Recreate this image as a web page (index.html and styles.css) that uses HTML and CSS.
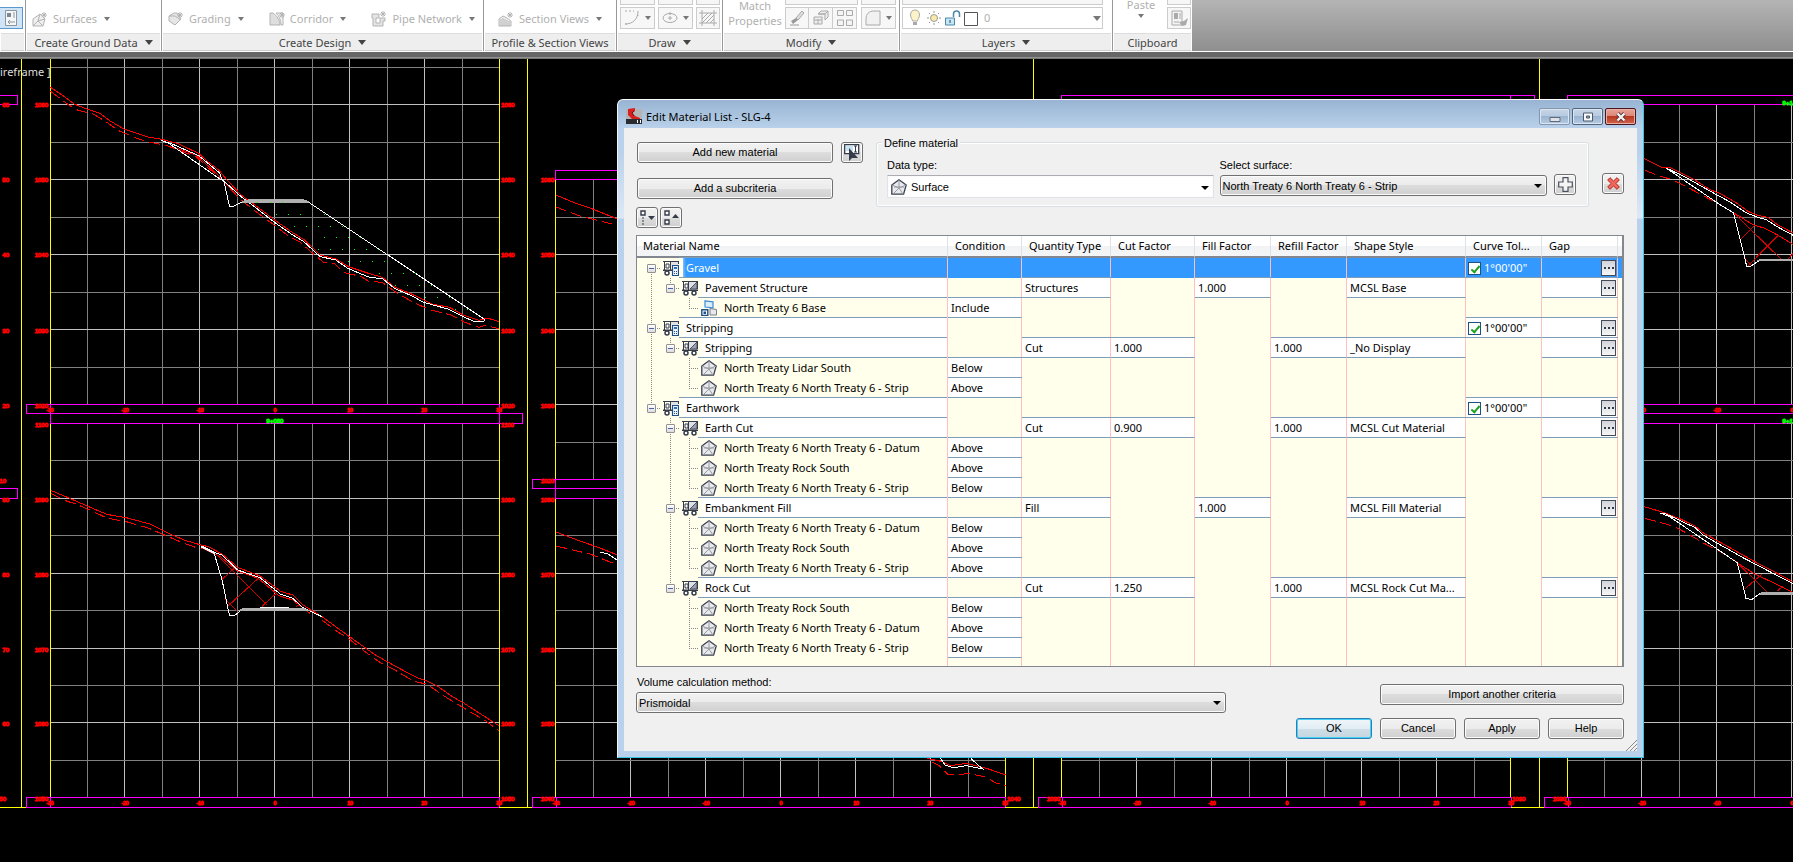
FILE: index.html
```html
<!DOCTYPE html>
<html lang="en">
<head>
<meta charset="utf-8">
<title>Edit Material List - SLG-4</title>
<link rel="stylesheet" href="styles.css">
</head>
<body>
<svg class="defs" aria-hidden="true">
  <defs>
    <symbol id="surface" viewBox="0 0 16 16"><path d="M.8 6 8 .8 15.2 6 12.6 15.2H.8z" fill="#e9eaee" stroke="#3b4150" stroke-width="1.3"/><path d="M8 1v8L1 6M8 9l7-3M8 9l4 6M8 9l-6 6M3 8h10" fill="none" stroke="#9a9ca3"/></symbol>
    <symbol id="truck" viewBox="0 0 16 16"><path d="M0 1.500h16M1.500 2v8M6.500 1v9M15.500 2v7" fill="none" stroke="#343b4a"/><path d="M3 4h3v4H3z" fill="#fff" stroke="#343b4a"/><path d="M7 2h8v7H7z" fill="#dfe1e6"/><path d="m8 9 7-7v7z" fill="#9aa0ac" stroke="#343b4a" stroke-width=".8"/><path d="M0 9.500h16v1.500H0z" fill="#343b4a"/><circle cx="4" cy="13" r="2" fill="#fff" stroke="#343b4a" stroke-width="1.500"/><circle cx="12" cy="13" r="2" fill="#fff" stroke="#343b4a" stroke-width="1.500"/></symbol>
    <symbol id="truckcalc" viewBox="0 0 16 16"><path d="M0 1.500h16M1.500 2v8M7.500 1v9M15.500 1v3" fill="none" stroke="#343b4a"/><path d="M3 4h3v4H3z" fill="#fff" stroke="#343b4a"/><path d="M8 2h7v3H8z" fill="#dfe1e6"/><path d="M0 9.500h9v1.500H0z" fill="#343b4a"/><circle cx="4" cy="13" r="2" fill="#fff" stroke="#343b4a" stroke-width="1.500"/><path d="M9.500 5.500h6v10h-6z" fill="#eef5fc" stroke="#1f4f86" stroke-width="1.2"/><path d="M11 7h3v2h-3z" fill="#2f6fb5"/><path d="M11 11.500h1M13 11.500h1M11 13.500h1M13 13.500h1" stroke="#1f4f86"/></symbol>
    <symbol id="corridor" viewBox="0 0 16 16"><path d="m4 .8 8 1v6L4 7z" fill="#dcedfb" stroke="#3d8ed6" stroke-width="1.2"/><path d="m9 8.500 6.500 1v5.500H9z" fill="#e6e8ec" stroke="#7a7f8b"/><path d="M.8 9.800h6v5.700h-6z" fill="#fff" stroke="#1f4f86" stroke-width="1.4"/><path d="M2.500 11.500h2.500V14H2.500z" fill="#1f4f86"/></symbol>
  </defs>
</svg>

<header class="ribbon">
  <section class="panel p-tools">
    <div class="body"><button class="tile on" aria-label="Toolspace"><svg width="12" height="16" viewBox="0 0 12 16"><path d="M.5.500h11v15H.5z" fill="#f4f6f8" stroke="#8d959e"/><path d="M2 3h4v4H2z" fill="#7d8791"/><path d="M8 3h2M8 5h2M8 7h2M3 12h7M5 10l-2 2 2 2" fill="none" stroke="#8d959e"/></svg></button></div>
    <h2></h2>
  </section>
  <section class="panel p-ground">
    <div class="body">
      <button class="cmd"><svg width="16" height="16" viewBox="0 0 16 16" fill="none" stroke="#b3b3b3"><path d="M1 15V8l7-5 5 5-2 7z" fill="#f0f0f0"/><path d="m8 3-2 7-5 5M6 10l5 5M6 10l7-2M12 1v6M9 4h6M10 2l4 4M14 2l-4 4"/></svg>Surfaces<i></i></button>
    </div>
    <h2>Create Ground Data<i></i></h2>
  </section>
  <section class="panel p-design">
    <div class="body">
      <button class="cmd"><svg width="16" height="16" viewBox="0 0 16 16" fill="none" stroke="#b3b3b3"><path d="M1 10V5l5-3h3l4 6-6 6z" fill="#e6e6e6"/><path d="M1 5h6l6 4M12 1v6M9 4h6M10 2l4 4M14 2l-4 4"/></svg>Grading<i></i></button>
      <button class="cmd"><svg width="16" height="16" viewBox="0 0 16 16" fill="none" stroke="#b3b3b3"><path d="M1 2h3c4 3 7 7 7 12H1z" fill="#dedede"/><path d="M7 2h7v12h-2C12 9 10 5 7 2M13 1v6M10 4h6M11 2l4 4M15 2l-4 4" fill="#f4f4f4"/></svg>Corridor<i></i></button>
      <button class="cmd"><svg width="16" height="16" viewBox="0 0 16 16" fill="none" stroke="#b3b3b3"><path d="M1 3h7v4H5v5h4V7h5v3h-2v5H2V7H1z" fill="#e4e4e4"/><path d="M12 0v6M9 3h6M10 1l4 4M14 1l-4 4"/></svg>Pipe Network<i></i></button>
    </div>
    <h2>Create Design<i></i></h2>
  </section>
  <section class="panel p-views">
    <div class="body">
      <button class="cmd"><svg width="16" height="16" viewBox="0 0 16 16" fill="none" stroke="#b3b3b3"><path d="M1 15V8l4-3 4 2 4 3v5z" fill="#eee"/><path d="M3 8v7M5 7v8M7 8v7M9 9v6M11 10v5M12 1v6M9 4h6M10 2l4 4M14 2l-4 4"/></svg>Section Views<i></i></button>
    </div>
    <h2>Profile &amp; Section Views</h2>
  </section>
  <section class="panel p-draw">
    <div class="body">
      <div class="tiles"><span class="stub w36"></span><span class="stub w36"></span><span class="stub"></span>
        <button class="tile split" aria-label="Arc"><svg width="16" height="16" viewBox="0 0 16 16" fill="none" stroke="#aaa"><path d="M14 1c0 8-5 13-13 13"/><path d="M1 1h9M1 14h3M14 5v1" stroke-dasharray="2 2"/></svg><i></i></button>
        <button class="tile split" aria-label="Ellipse"><svg width="16" height="16" viewBox="0 0 16 16" fill="none" stroke="#aaa"><ellipse cx="8" cy="8" rx="7" ry="4.500"/><path d="M6 8h4M8 6v4M8 2v3"/></svg><i></i></button>
        <button class="tile" aria-label="Hatch"><svg width="18" height="16" viewBox="0 0 18 16" fill="none" stroke="#aaa"><path d="M3 0v16M15 0v16M0 3h18M0 13h18M3 9l6-6M3 13 13 3M7 13l8-8M11 13l4-4"/></svg></button></div>
    </div>
    <h2>Draw<i></i></h2>
  </section>
  <section class="panel p-modify">
    <div class="body">
      <button class="match">Match<br>Properties</button>
      <div class="tiles"><span class="stub w72"></span><span class="stub w36"></span>
        <div class="trio">
          <button class="tile" aria-label="Erase"><svg width="16" height="16" viewBox="0 0 16 16"><path d="M7 8 13 1l2 2-6 7z" fill="#ddd" stroke="#aaa"/><path d="m2 11 5-3 2 2-5 4z" fill="#999"/><path d="M1 15h9" stroke="#999"/></svg></button>
          <button class="tile" aria-label="Explode"><svg width="16" height="16" viewBox="0 0 16 16" fill="#eee" stroke="#aaa"><path d="M5 4 8 1h7l-3 3zM12 4l3-3v6l-3 3M1 7h8v7H1zM5 4h7v6M5 9v5M1 10h8"/></svg></button>
          <button class="tile" aria-label="Array"><svg width="16" height="16" viewBox="0 0 16 16" fill="#f4f4f4" stroke="#aaa"><path d="M.5.500h6v5h-6zM9.500.500h6v5h-6zM.5 10h6v5.500h-6zM9.500 10h6v5.500h-6z"/></svg></button>
        </div>
        <button class="tile split" aria-label="Fillet"><svg width="16" height="16" viewBox="0 0 16 16" fill="#f1f1f1" stroke="#aaa"><path d="M1 15V9c0-5 3-8 8-8h6v14z"/></svg><i></i></button></div>
    </div>
    <h2>Modify<i></i></h2>
  </section>
  <section class="panel p-layers">
    <div class="body">
      <div class="layers"><span class="stub full"></span>
        <button class="layer"><svg width="70" height="18" viewBox="0 0 70 18"><path d="M6 1C3 1 1.500 3 1.500 6s2 4 2 6h5c0-2 2-3 2-6S9 1 6 1z" fill="#fdf3c8" stroke="#aaa"/><path d="M4 13h4v3H4z" fill="#aaa"/><circle cx="25" cy="9" r="3.500" fill="#fbe9a8" stroke="#999"/><path d="M25 2v2M25 14v2M18 9h2M30 9h2M20 4l1 1M29 13l1 1M30 4l-1 1M20 14l1-1" stroke="#999"/><path d="M36.500 9h9v7h-9z" fill="#c4e6f5" stroke="#4f86a8"/><path d="M44.500 8V5c0-4 6-4 6 0v3" fill="none" stroke="#4f86a8" stroke-width="1.500"/><path d="M41 11v3" stroke="#246"/><path d="M55.500 3.500h13v13h-13z" fill="#fff" stroke="#555"/></svg><span>0</span><i></i></button>
      </div>
    </div>
    <h2>Layers<i></i></h2>
  </section>
  <section class="panel p-clip">
    <div class="body"><button class="match paste">Paste<i></i></button>
      <div class="tiles"><span class="stub"></span><button class="tile" aria-label="Copy clip"><svg width="17" height="17" viewBox="0 0 17 17"><path d="M1 1h10v14H1z" fill="#f4f4f4" stroke="#aaa"/><path d="M3 3h4v6H3z" fill="#aaa"/><path d="M8 4h2M8 6h2M8 8h2M3 12h5" stroke="#aaa"/><path d="m8 12 3 4 4-1 2-7-4 3z" fill="#aaa"/></svg></button></div>
    </div>
    <h2>Clipboard</h2>
  </section>
</header>

<main class="desktop">
  <svg class="drawing" role="img" aria-label="Cross section drawing">
    <defs>
      <g id="vlines" fill="none"><path class="minor" d="M37.500 0V748M112.500 0V748M187.500 0V748M262.500 0V748M337.500 0V748M412.500 0V748"/><path class="major" d="M74.500 0V748M149.500 0V748M224.500 0V748M299.500 0V748M374.500 0V748"/></g>
      <g id="hl-a" fill="none"><path class="minor" d="M0 67.500H449M0 142.500H449M0 217.500H449M0 292.500H449M0 367.500H449M0 460.500H449M0 535.500H449M0 610.500H449M0 685.500H449M0 760.500H449"/><path class="major" d="M0 104.500H449M0 179.500H449M0 254.500H449M0 329.500H449M0 498.500H449M0 573.500H449M0 648.500H449M0 722.500H449"/></g>
      <g id="hl-b" fill="none"><path class="minor" d="M0 217.500H449M0 292.500H449M0 367.500H449M0 442.500H449M0 535.500H449M0 610.500H449M0 685.500H449M0 760.500H449"/><path class="major" d="M0 254.500H449M0 329.500H449M0 404.500H449M0 573.500H449M0 648.500H449M0 722.500H449"/></g>
      <g id="offs"><text x="50" y="0">-30</text><text x="125" y="0">-20</text><text x="200" y="0">-10</text><text x="275" y="0">0</text><text x="350" y="0">10</text><text x="424" y="0">20</text><text x="499" y="0">30</text></g>
      <g id="foot" fill="none"><path class="mag" d="M26.500 797.500H499.500V807.500H26.500zM50.500 797.500V807.500"/><path class="yel" d="M-7 807.500H26M21.500 59V807.500M499.500 807.500H532"/></g>
    </defs>

    <use href="#vlines" x="50" y="59"/><use href="#vlines" x="556" y="59"/><use href="#vlines" x="1062" y="59"/><use href="#vlines" x="1567" y="59"/>
    <use href="#hl-a" x="50"/><use href="#hl-b" x="556"/><use href="#hl-b" x="1062"/><use href="#hl-a" x="1567"/>
    <path d="M50 404h450v19H50zM1567 404h300v19h-300zM1567 59h300v45h-300zM556 59h449v121H556zM556 479h449v19H556zM1062 59h449v60h-449zM50 797h1800v11H50z" fill="#000"/>
    <path class="yel" d="M50.500 59V797M499.500 59V797M555.500 180V797M1005.500 180V797M1061.500 180V797M1510.500 180V797M1567.500 104V797"/>
    <use href="#foot"/><use href="#foot" x="506"/><use href="#foot" x="1012"/><use href="#foot" x="1518"/>
    <path class="mag" d="M26.500 404.500H499.500V413.500H26.500zM50.500 404.500V423.500H522.500V413.500H50M499.500 404V423M-5 95.500H17.500V104.500H-5M-5 488.500H17.500V498.500H-5M640 170.500H555.500V179.500H640M640 479.500H532.500V488.500H640M555.500 479V498.500H640M1061.500 110V95.500H1534.500V104M1510.500 95V104M1567.500 110V95.500H1850M1567 104.500H1850M1567 404.500H1850M1567 413.500H1850M1567 423.500H1850"/>

    <g transform="translate(0 50) scale(.34435 .33333)">
      <path class="red" d="M147 112 180 135 217 163 255 178 290 190 320 213 360 237 430 261 470 268 515 280 577 310 600 332 637 362 655 385 700 435 740 465 800 512 850 548 884 570 930 615 975 627 1012 650 1070 670 1110 682 1147 712 1195 732 1255 762 1305 772 1345 795 1390 811 1415 804 1450 815M500 290 570 315 605 348 650 392 690 440"/>
      <path class="red dash" d="M147 124 200 165 225 180 270 192 300 210 345 242 405 268 440 278 480 285 530 305 570 320 600 350 640 385 700 450 760 498 800 528 840 560 870 575 905 607 940 637 970 640 1000 668 1050 680 1070 694 1110 697 1150 727 1200 757 1250 780 1310 795 1350 817 1390 832 1410 826 1450 837"/>
      <path class="wht" d="M468 271 500 282 577 317 637 368 645 388 700 440 720 455 797 517 850 555 880 573 930 620 975 630 1010 655 1070 681 1112 687 1147 716 1195 737 1230 757 1300 777 1345 800 1380 816 1405 816 1407 808 898 458 740 458M468 271 490 280 640 388 650 392 660 440 667 469 680 468 702 457"/>
      <path class="pave" d="M703 453 725 447H877L897 453V458H703z"/>
      <path class="dots" d="M802 493h90M942 493h4M855 529h150M942 562h120M924 598h180M1011 634h140M1100 670h110M1148 706h110M1235 742h80M1322 778h40M745 457h12M785 457h40"/>
    </g>
    <g transform="translate(0 400) scale(.34435 .33333)">
      <path class="red" d="M147 271 200 294 260 321 310 343 370 354 435 372 500 405 540 422 580 434 605 440 645 462 690 502 755 528 815 574 850 585 880 615 935 650 1015 710 1090 765 1165 808 1215 835 1235 841 1270 858 1315 891 1345 908 1450 978M585 444 640 470 690 513 750 535 810 587 850 600 900 640"/>
      <path class="red dash" d="M147 280 190 302 220 312 265 332 310 354 370 366 430 384 480 406 530 428 570 443M935 660 980 695 1015 718 1060 755 1100 785 1150 812 1200 843 1240 853 1300 895 1360 932 1410 962 1450 993"/>
      <path class="thin" d="M630 465 775 615M660 620 755 530M643 540 685 500M655 598 688 632M760 620 800 582M858 622 870 612"/>
      <path class="wht" d="M585 438 622 457 645 465 690 510 755 533 815 583 850 595 880 623 935 650M585 442 622 460 645 540 663 632 667 647 682 646 705 627M755 622H840"/>
      <path class="pave" d="M690 632 705 625H885L900 632z"/>
    </g>
    <g transform="translate(1620 50) scale(.33333 .38270)">
      <path class="red" d="M-10 250 75 285 125 307 150 307 225 340 270 365 300 375 345 397 385 422 410 431 445 438 470 455 519 478 600 520M340 425 400 457 435 466 480 487 519 508M-10 1180 75 1194 130 1208 180 1225 225 1244 250 1262 345 1308 400 1335 460 1362 519 1390M352 1340 400 1367 450 1388 519 1418"/>
      <path class="red dash" d="M75 314 105 325 160 340 205 360 270 390 300 404M75 1224 110 1232 160 1244 205 1265 250 1288 320 1320 350 1338"/>
      <path class="thin" d="M340 425 485 548M362 495 405 458M375 545 392 562M385 563 475 484M505 545 519 532M352 1340 440 1415M375 1408 425 1370M470 1415 490 1400"/>
      <path class="wht" d="M138 308 200 334 285 376 330 397 380 426 410 436 440 444 470 461 519 484M138 308 200 345 300 404 340 425 362 500 380 565 392 565 420 549M122 1210 140 1213 225 1248 250 1268 370 1327 460 1368 519 1394M122 1210 150 1220 290 1303 352 1340 378 1433 395 1436 420 1420"/>
      <path class="pave" d="M410 551 420 545H519V551zM415 1424 425 1416H519V1424z"/>
    </g>
    <g transform="translate(520 640) scale(.33333)">
      <path class="red" d="M1220 355 1268 365 1290 377 1340 370 1400 385 1457 405"/>
      <path class="red dash" d="M1235 366 1255 375 1285 405 1350 401 1400 412 1425 428 1457 437"/>
      <path class="wht" d="M1262 355 1275 375 1300 383 1340 377 1388 387 1352 355"/>
    </g>
    <path class="red" d="M556 195 575 203 590 208 620 220M556 532 580 541 600 548 620 556"/>
    <path class="red dash" d="M556 207 580 216 620 226M556 546 590 554 620 566"/>
    <path class="wht" d="M600 552 608 554 620 562"/>

    <g class="elev end"><text x="48" y="107">1060</text><text x="48" y="182">1050</text><text x="48" y="257">1040</text><text x="48" y="333">1030</text><text x="48" y="408">1020</text><text x="48" y="427">1100</text><text x="48" y="502">1090</text><text x="48" y="577">1080</text><text x="48" y="652">1070</text><text x="48" y="726">1060</text><text x="48" y="801">1050</text>
      <text x="9" y="107">60</text><text x="9" y="182">50</text><text x="9" y="257">40</text><text x="9" y="333">30</text><text x="9" y="408">20</text><text x="6" y="483">10</text><text x="9" y="502">90</text><text x="9" y="577">80</text><text x="9" y="652">70</text><text x="9" y="726">60</text><text x="6" y="801">50</text>
      <text x="554" y="182">1060</text><text x="554" y="257">1050</text><text x="554" y="333">1040</text><text x="554" y="408">1030</text><text x="554" y="483">1020</text><text x="554" y="502">1080</text><text x="554" y="577">1070</text><text x="554" y="652">1060</text><text x="554" y="726">1050</text><text x="554" y="801">1040</text><text x="1060" y="801">1030</text><text x="1566" y="801">1030</text></g>
    <g class="elev"><text x="501" y="107">1060</text><text x="501" y="182">1050</text><text x="501" y="257">1040</text><text x="501" y="333">1030</text><text x="501" y="408">1020</text><text x="501" y="427">1100</text><text x="501" y="502">1090</text><text x="501" y="577">1080</text><text x="501" y="652">1070</text><text x="501" y="726">1060</text><text x="501" y="801">1050</text><text x="1007" y="801">1040</text><text x="1512" y="801">1030</text></g>
    <g class="elev mid"><use href="#offs" y="412"/><use href="#offs" y="805"/><use href="#offs" x="506" y="805"/><use href="#offs" x="1012" y="805"/><use href="#offs" x="1517" y="805"/><use href="#offs" x="1517" y="412"/></g>
    <g class="elev mid station"><text x="275" y="423">9+080</text><text x="1791" y="105">9+140</text><text x="1791" y="423">9+120</text></g>
    <text class="viewlabel" x="0" y="76">ireframe ]</text>
  </svg>

  <form class="dialog" aria-label="Edit Material List - SLG-4">
    <div class="titlebar">
      <svg width="16" height="16" viewBox="0 0 16 16"><path d="M0 1h16v14H0z" fill="#b4b4b4"/><path d="M0 11h16v5H0z" fill="#2a2c30"/><path d="M2 1 9 0v3L6 5l3 3 5 2v1H6L2 7z" fill="#d81f1f"/><path d="M8 3 6 5l2 3" fill="none" stroke="#701010"/><path d="M11.500 12v3M14.500 12v3" stroke="#fff" fill="none"/></svg>
      <h1>Edit Material List - SLG-4</h1>
      <div class="wbtns">
        <button type="button" class="dim" aria-label="Minimize"><svg width="12" height="12" viewBox="0 0 12 12"><path d="M1 6.500h10v4H1z" fill="#dfe3e8" stroke="#5e6a78"/></svg></button>
        <button type="button" aria-label="Maximize"><svg width="12" height="12" viewBox="0 0 12 12"><path d="M1.500 2h9v8h-9z" fill="#f6f8fa" stroke="#4c5868"/><path d="M4.500 5h3v2h-3z" fill="#8fa9c8" stroke="#4c5868"/></svg></button>
        <button type="button" class="close" aria-label="Close"><svg width="12" height="12" viewBox="0 0 12 12"><path d="m2.500 2.500 7 7m0-7-7 7" stroke="#5a3238" stroke-width="4"/><path d="m2.500 2.500 7 7m0-7-7 7" stroke="#f4f4f4" stroke-width="2.400"/></svg></button>
      </div>
    </div>
    <div class="content">
      <div class="top">
        <div class="adds">
          <button type="button" class="btn">Add new material</button>
          <button type="button" class="ibtn" aria-label="Pick material"><svg width="16" height="17" viewBox="0 0 16 17"><path d="M.7.700h14v9h-14z" fill="#fff" stroke="#343b4a" stroke-width="1.300"/><path d="M2 2h7v5H2z" fill="#c8e2f5"/><path d="M11.500 2v6M10 2h3M10 8h3" stroke="#343b4a"/><path d="M5 4v13l3-3h6z" fill="#343b4a"/></svg></button>
          <button type="button" class="btn">Add a subcriteria</button>
        </div>
        <fieldset>
          <legend>Define material</legend>
          <div class="field dtype"><label for="dtype">Data type:</label>
            <div class="combo flat"><svg width="16" height="16"><use href="#surface"/></svg><select id="dtype"><option>Surface</option></select></div></div>
          <div class="field surf"><label for="surf">Select surface:</label>
            <div class="combo"><select id="surf"><option>North Treaty 6 North Treaty 6 - Strip</option></select></div></div>
          <button type="button" class="ibtn" aria-label="Add surface"><svg width="15" height="15" viewBox="0 0 15 15"><path d="M5 .7h5V5h4.300v5H10v4.300H5V10H.7V5H5z" fill="#f4f4f4" stroke="#4a505c" stroke-width="1.200"/></svg></button>
        </fieldset>
        <button type="button" class="ibtn del" aria-label="Delete"><svg width="13" height="13" viewBox="0 0 13 13"><path d="M3 .7 6.500 4 10 .7 12.300 3 9 6.500l3.300 3.500L10 12.300 6.500 9 3 12.300.7 10 4 6.500.7 3z" fill="#f0675c" stroke="#b3241c"/></svg></button>
      </div>
      <div class="tools">
        <button type="button" class="ibtn" aria-label="Expand all"><svg width="15" height="15" viewBox="0 0 15 15"><path d="M1 1h4v4H1z" fill="#fff" stroke="#343b4a" stroke-width="1.400"/><path d="M3 7v8" stroke="#343b4a" stroke-dasharray="2 1"/><path d="M8 6h7l-3.500 4z" fill="#343b4a"/></svg></button>
        <button type="button" class="ibtn" aria-label="Collapse all"><svg width="15" height="15" viewBox="0 0 15 15"><path d="M1 1h4v4H1zM1 10h4v4H1z" fill="#fff" stroke="#343b4a" stroke-width="1.400"/><path d="M8 8h7l-3.500-4z" fill="#343b4a"/></svg></button>
      </div>

      <div class="grid">
      <table>
        <colgroup><col><col class="c74"><col class="c89"><col class="c84"><col class="c76"><col class="c76"><col class="c119"><col class="c76"><col class="c76"><col class="c5"></colgroup>
        <thead><tr><th>Material Name</th><th>Condition</th><th>Quantity Type</th><th>Cut Factor</th><th>Fill Factor</th><th>Refill Factor</th><th>Shape Style</th><th>Curve Tol...</th><th>Gap</th><th></th></tr></thead>
        <tbody>
          <tr class="sel"><td><div class="n"><b class="g dn"><button type="button" aria-label="Collapse"></button></b><svg><use href="#truckcalc"/></svg><span class="ed">Gravel</span></div></td><td></td><td></td><td></td><td></td><td></td><td></td><td class="w"><label><input type="checkbox" checked>1°00'00"</label></td><td class="w"><button type="button" class="more" aria-label="Edit gap"></button></td><td></td></tr>
          <tr><td><div class="n"><b class="g v"></b><b class="g up"><button type="button" aria-label="Collapse"></button></b><svg><use href="#truck"/></svg><span class="ed">Pavement Structure</span></div></td><td></td><td class="w">Structures</td><td></td><td class="w">1.000</td><td></td><td class="w">MCSL Base</td><td></td><td class="w"><button type="button" class="more" aria-label="Edit gap"></button></td><td></td></tr>
          <tr><td><div class="n"><b class="g v"></b><b class="g"></b><b class="g up"></b><svg><use href="#corridor"/></svg><span>North Treaty 6 Base</span></div></td><td class="w">Include</td><td></td><td></td><td></td><td></td><td></td><td></td><td></td><td></td></tr>
          <tr><td><div class="n"><b class="g v h"><button type="button" aria-label="Collapse"></button></b><svg><use href="#truckcalc"/></svg><span class="ed">Stripping</span></div></td><td></td><td></td><td></td><td></td><td></td><td></td><td class="w"><label><input type="checkbox" checked>1°00'00"</label></td><td class="w"><button type="button" class="more" aria-label="Edit gap"></button></td><td></td></tr>
          <tr><td><div class="n"><b class="g v"></b><b class="g up"><button type="button" aria-label="Collapse"></button></b><svg><use href="#truck"/></svg><span class="ed">Stripping</span></div></td><td></td><td class="w">Cut</td><td class="w">1.000</td><td></td><td class="w">1.000</td><td class="w">_No Display</td><td></td><td class="w"><button type="button" class="more" aria-label="Edit gap"></button></td><td></td></tr>
          <tr><td><div class="n"><b class="g v"></b><b class="g"></b><b class="g v h"></b><svg><use href="#surface"/></svg><span>North Treaty Lidar South</span></div></td><td class="w">Below</td><td></td><td></td><td></td><td></td><td></td><td></td><td></td><td></td></tr>
          <tr><td><div class="n"><b class="g v"></b><b class="g"></b><b class="g up"></b><svg><use href="#surface"/></svg><span>North Treaty 6 North Treaty 6 - Strip</span></div></td><td class="w">Above</td><td></td><td></td><td></td><td></td><td></td><td></td><td></td><td></td></tr>
          <tr><td><div class="n"><b class="g up"><button type="button" aria-label="Collapse"></button></b><svg><use href="#truckcalc"/></svg><span class="ed">Earthwork</span></div></td><td></td><td></td><td></td><td></td><td></td><td></td><td class="w"><label><input type="checkbox" checked>1°00'00"</label></td><td class="w"><button type="button" class="more" aria-label="Edit gap"></button></td><td></td></tr>
          <tr><td><div class="n"><b class="g"></b><b class="g v h"><button type="button" aria-label="Collapse"></button></b><svg><use href="#truck"/></svg><span class="ed">Earth Cut</span></div></td><td></td><td class="w">Cut</td><td class="w">0.900</td><td></td><td class="w">1.000</td><td class="w">MCSL Cut Material</td><td></td><td class="w"><button type="button" class="more" aria-label="Edit gap"></button></td><td></td></tr>
          <tr><td><div class="n"><b class="g"></b><b class="g v"></b><b class="g v h"></b><svg><use href="#surface"/></svg><span>North Treaty 6 North Treaty 6 - Datum</span></div></td><td class="w">Above</td><td></td><td></td><td></td><td></td><td></td><td></td><td></td><td></td></tr>
          <tr><td><div class="n"><b class="g"></b><b class="g v"></b><b class="g v h"></b><svg><use href="#surface"/></svg><span>North Treaty Rock South</span></div></td><td class="w">Above</td><td></td><td></td><td></td><td></td><td></td><td></td><td></td><td></td></tr>
          <tr><td><div class="n"><b class="g"></b><b class="g v"></b><b class="g up"></b><svg><use href="#surface"/></svg><span>North Treaty 6 North Treaty 6 - Strip</span></div></td><td class="w">Below</td><td></td><td></td><td></td><td></td><td></td><td></td><td></td><td></td></tr>
          <tr><td><div class="n"><b class="g"></b><b class="g v h"><button type="button" aria-label="Collapse"></button></b><svg><use href="#truck"/></svg><span class="ed">Embankment Fill</span></div></td><td></td><td class="w">Fill</td><td></td><td class="w">1.000</td><td></td><td class="w">MCSL Fill Material</td><td></td><td class="w"><button type="button" class="more" aria-label="Edit gap"></button></td><td></td></tr>
          <tr><td><div class="n"><b class="g"></b><b class="g v"></b><b class="g v h"></b><svg><use href="#surface"/></svg><span>North Treaty 6 North Treaty 6 - Datum</span></div></td><td class="w">Below</td><td></td><td></td><td></td><td></td><td></td><td></td><td></td><td></td></tr>
          <tr><td><div class="n"><b class="g"></b><b class="g v"></b><b class="g v h"></b><svg><use href="#surface"/></svg><span>North Treaty Rock South</span></div></td><td class="w">Above</td><td></td><td></td><td></td><td></td><td></td><td></td><td></td><td></td></tr>
          <tr><td><div class="n"><b class="g"></b><b class="g v"></b><b class="g up"></b><svg><use href="#surface"/></svg><span>North Treaty 6 North Treaty 6 - Strip</span></div></td><td class="w">Above</td><td></td><td></td><td></td><td></td><td></td><td></td><td></td><td></td></tr>
          <tr><td><div class="n"><b class="g"></b><b class="g up"><button type="button" aria-label="Collapse"></button></b><svg><use href="#truck"/></svg><span class="ed">Rock Cut</span></div></td><td></td><td class="w">Cut</td><td class="w">1.250</td><td></td><td class="w">1.000</td><td class="w">MCSL Rock Cut Ma...</td><td></td><td class="w"><button type="button" class="more" aria-label="Edit gap"></button></td><td></td></tr>
          <tr><td><div class="n"><b class="g"></b><b class="g"></b><b class="g v h"></b><svg><use href="#surface"/></svg><span>North Treaty Rock South</span></div></td><td class="w">Below</td><td></td><td></td><td></td><td></td><td></td><td></td><td></td><td></td></tr>
          <tr><td><div class="n"><b class="g"></b><b class="g"></b><b class="g v h"></b><svg><use href="#surface"/></svg><span>North Treaty 6 North Treaty 6 - Datum</span></div></td><td class="w">Above</td><td></td><td></td><td></td><td></td><td></td><td></td><td></td><td></td></tr>
          <tr><td><div class="n"><b class="g"></b><b class="g"></b><b class="g up"></b><svg><use href="#surface"/></svg><span>North Treaty 6 North Treaty 6 - Strip</span></div></td><td class="w">Below</td><td></td><td></td><td></td><td></td><td></td><td></td><td></td><td></td></tr>
          <tr class="pad"><td></td><td></td><td></td><td></td><td></td><td></td><td></td><td></td><td></td><td></td></tr>
        </tbody>
      </table>
      </div>

      <div class="bottom">
        <div class="field method"><label for="method">Volume calculation method:</label>
          <div class="combo"><select id="method"><option>Prismoidal</option></select></div></div>
        <div class="actions">
          <button type="button" class="btn import">Import another criteria</button>
          <button type="button" class="btn ok">OK</button><button type="button" class="btn">Cancel</button><button type="button" class="btn">Apply</button><button type="button" class="btn">Help</button>
        </div>
      </div>
      <svg class="grip" width="12" height="12" viewBox="0 0 12 12"><path d="M1 12 12 1M5 12l7-7M9 12l3-3" stroke="#8a8a8a"/></svg>
    </div>
  </form>
</main>
</body>
</html>
```
FILE: styles.css
```css
* { box-sizing: border-box; }
html, body { height: 100%; }
body { margin: 0; display: flex; flex-direction: column; background: #000; overflow: hidden; color: #000; font: 11px/14px "Noto Sans", "Open Sans", sans-serif; }
button, select, input { font: inherit; color: inherit; margin: 0; padding: 0; }
svg { flex: none; }
.defs { position: absolute; width: 0; height: 0; }

/* ribbon */
.ribbon { display: flex; flex: none; height: 59px; background: linear-gradient(#b4b4b4, #8f8f8f 51px, #fff 51px, #fff 52px, #666 52px, #666 57px, #aaa 57px, #777 58px); padding-bottom: 8px; color: #b0b0b0; }
.panel { display: flex; flex-direction: column; background: #fff; border-right: 1px solid #999; flex: none; }
.panel .body { display: flex; height: 33px; align-items: flex-end; padding-bottom: 4px; overflow: hidden; }
.panel h2 { margin: 0 1px; height: 18px; padding-top: 1px; display: flex; align-items: center; justify-content: center; background: #eee; border-bottom: 1px solid #ccc; border-top: 1px solid #ddd; color: #444; font-size: 11px; font-weight: 400; white-space: nowrap; }
.ribbon i { border: 3px solid transparent; border-top: 4px solid #777; border-bottom: 0; margin-left: 7px; }
.ribbon h2 i { border-width: 5px 4px 0; border-top-color: #444; }
.ribbon button { background: none; border: 0; }
.p-tools { width: 26px; }
.p-ground { width: 136px; }
.p-design { width: 322px; }
.p-views { width: 133px; }
.p-draw { width: 106px; }
.p-modify { width: 177px; }
.p-layers { width: 213px; }
.p-clip { width: 79px; border-right: 0; }
.ribbon .cmd { display: flex; align-items: center; height: 22px; padding-top: 1px; white-space: nowrap; }
.cmd svg { margin-right: 5px; }
.p-ground .body { padding-left: 6px; }
.p-design .body { padding: 0 8px 4px 6px; justify-content: space-between; }
.p-views .body { padding-left: 14px; }
.p-draw .body { padding-left: 3px; }
.tiles { display: flex; flex-wrap: wrap; gap: 2px 3px; }
.p-draw .tiles { width: 102px; }
.stub { width: 24px; height: 6px; border: 1px solid #ccc; border-top: 0; background: #f6f6f6; }
.stub.w36 { width: 35px; }
.stub.w72 { width: 73px; }
.stub.full { width: 100%; }
.ribbon .tile { width: 24px; height: 22px; display: flex; align-items: center; justify-content: center; border: 1px solid #ccc; background: #f7f7f7; }
.ribbon .split { width: 35px; justify-content: space-around; }
.ribbon .split i { margin: 0; }
.ribbon .tile.on { background: #cfe4f7; border-color: #5a97cc; width: 23px; border-left: 0; }
.trio { display: flex; width: 73px; }
.trio .tile + .tile { border-left: 0; }
.ribbon .match { width: 56px; flex: none; text-align: center; line-height: 15px; height: 33px; }
.p-modify .body { padding-left: 4px; gap: 2px; }
.p-modify .tiles { width: 112px; flex: none; }
.p-layers .body { padding: 0 9px 4px 2px; }
.layers { width: 100%; display: flex; flex-direction: column; gap: 2px; }
.ribbon .layer { display: flex; width: 100%; height: 22px; align-items: center; border: 1px solid #ccc; padding: 0 1px 0 6px; gap: 5px; }
.layer span { flex: 1; text-align: left; }
.ribbon .layer i { border-width: 5px 4px 0; }
.p-clip .body { padding-left: 8px; gap: 6px; }
.ribbon .paste { display: flex; flex-direction: column; align-items: center; width: 40px; padding-top: 1px; }
.ribbon .paste i { margin: 2px 0 0; }
.p-clip .tiles { flex: none; width: 24px; }

/* drawing area */
.desktop { position: relative; flex: 1; min-height: 0; }
.drawing { position: absolute; left: 0; top: -59px; width: 100%; height: calc(100% + 59px); clip-path: inset(59px 0 0 0); shape-rendering: crispEdges; }
.drawing path { fill: none; vector-effect: non-scaling-stroke; }
.drawing > path[fill] { fill: #000; }
.drawing .minor { stroke: #808080; }
.drawing .major { stroke: #c0c0c0; }
.drawing .yel { stroke: #ff0; }
.drawing .mag { stroke: #f0f; }
.drawing .red { stroke: #f00; }
.drawing .thin { stroke: #d00000; }
.drawing .dash { stroke-dasharray: 11 5; }
.drawing .wht { stroke: #fff; }
.drawing .pave { fill: #b0b0b0; }
.drawing .dots { stroke: #0f0; stroke-dasharray: 1 11; }
.elev { fill: #f00; stroke: #f00; stroke-width: 1px; font: 6px "Liberation Sans", sans-serif; }
.end { text-anchor: end; }
.mid { text-anchor: middle; font-size: 5px; }
.station { fill: #0f0; stroke: #0f0; font-size: 6px; }
.viewlabel { fill: #ddd; font-size: 11px; }

/* dialog window */
.dialog { position: absolute; left: 617px; right: 149px; top: 40px; margin: 0; padding: 0 6px 6px; border: 1px solid #39c5e6; border-top-color: #fff; border-left-color: #eef5fc; border-radius: 6px 6px 0 0; background: linear-gradient(#98b4d2, #b9d1ea 28px, #b9d1ea 50px, #dde8f5 118px, #b9d1ea 119px); font: 11px/14px "Liberation Sans", Arial, sans-serif; }
.titlebar { display: flex; align-items: flex-start; height: 28px; padding: 8px 1px 0 2px; }
.titlebar h1 { margin: 1px 0 0 4px; flex: 1; font: 400 11px/16px "Noto Sans", sans-serif; }
.wbtns { display: flex; gap: 2px; }
.wbtns button { width: 31px; height: 17px; border: 1px solid #50647c; border-radius: 2px; display: flex; align-items: center; justify-content: center; background: linear-gradient(#c7d6e8, #b6c9df 50%, #9bb4d0 50%, #b4cbe3); box-shadow: inset 0 0 0 1px #dbe6f2; }
.wbtns .dim { border-color: #8496ad; }
.wbtns .close { border-color: #4a1420; background: linear-gradient(#e8a497, #d98575 50%, #b8371f 50%, #d0664c); box-shadow: inset 0 0 0 1px #e6b0a4; }
.content { position: relative; background: #f0f0f0; padding: 14px 13px 12px 12px; }

.btn, .ibtn, .combo { border: 1px solid #707070; border-radius: 3px; background: linear-gradient(#f2f2f2, #ebebeb 50%, #ddd 50%, #cfcfcf); box-shadow: inset 0 0 0 1px #fbfbfb; }
.btn { height: 21px; line-height: 17px; }
.ibtn { width: 22px; height: 21px; display: flex; align-items: center; justify-content: center; flex: none; }
.top { display: flex; height: 65px; }
.adds { display: grid; grid-template-columns: 196px 22px; gap: 15px 8px; padding-left: 1px; align-content: start; flex: none; }
fieldset { position: relative; flex: 1; min-width: 0; height: 65px; margin: 0 13px 0 13px; padding: 15px 12px 0 10px; border: 1px solid #d5dfe5; border-radius: 3px; display: flex; align-items: flex-start; box-shadow: inset 0 0 0 1px #fff; }
legend { position: absolute; top: -7px; left: 5px; padding: 0 2px; background: #f0f0f0; }
.field label { display: block; height: 17px; }
.dtype { flex: 327; margin-right: 6px; }
.surf { flex: 328; margin-right: 7px; }
.combo { position: relative; height: 21px; }
.combo::after { content: ""; position: absolute; right: 4px; top: 8px; border: 4px solid transparent; border-top: 4px solid #000; border-bottom: 0; pointer-events: none; }
.combo select { appearance: none; width: 100%; height: 19px; border: 0; background: none; padding: 0 16px 0 2px; display: block; outline: 0; }
.combo.flat { height: 23px; background: #fff; border-color: #abadb3 #e2e3ea #e2e3ea #e2e3ea; border-radius: 1px; }
.combo.flat svg { position: absolute; left: 3px; top: 3px; }
.combo.flat select { height: 21px; padding-left: 23px; }
.combo.flat::after { top: 10px; }
fieldset .ibtn { margin-top: 16px; }
.top .del { margin-top: 31px; }
.tools { display: flex; gap: 2px; padding-bottom: 7px; }

/* material table */
.grid { border: 1px solid #828790; border-right-width: 2px; background: #ffffeb; }
table { width: 100%; table-layout: fixed; border-collapse: separate; border-spacing: 0; font: 11px/16px "Noto Sans", sans-serif; }
.c74 { width: 74px; } .c89 { width: 89px; } .c84 { width: 84px; } .c76 { width: 76px; } .c119 { width: 119px; } .c5 { width: 4px; }
th { height: 22px; padding: 0 0 0 7px; text-align: left; font-weight: 400; white-space: nowrap; overflow: hidden; border-right: 1px solid #dfe1e5; border-bottom: 2px solid #828790; background: linear-gradient(#fff 10px, #f2f3f5 10px, #f4f5f7); }
th:first-child { padding-left: 6px; }
th:last-child, td:last-child { padding: 0; border-right: 0; }
td { height: 20px; padding: 1px 0 1px 3px; border-right: 1px solid #ffc0c0; white-space: nowrap; overflow: hidden; }
td:first-child { padding: 0 0 0 5px; overflow: visible; }
td.w { background: #fff; border-bottom: 1px solid #7f9db9; box-shadow: 0 -1px 0 #7f9db9; padding-bottom: 0; }
td label { display: flex; align-items: center; }
tr.pad td { height: 8px; padding: 0; }
.n { display: flex; height: 20px; align-items: center; }
.n > svg { width: 16px; height: 16px; margin-left: 2px; }
.n > span { flex: 1; height: 20px; line-height: 20px; padding-left: 7px; }
.n > .ed { border-bottom: 1px solid #7f9db9; box-shadow: 0 -1px 0 #7f9db9; background: linear-gradient(90deg, #ffffeb 4px, #fff 4px); }
.g { width: 19px; height: 20px; flex: none; display: flex; align-items: center; padding-left: 5px; background-repeat: no-repeat;
  --y: repeating-linear-gradient(#888 0 1px, transparent 1px 2px); --x: repeating-linear-gradient(90deg, #888 0 1px, transparent 1px 2px); }
.g.v { background-image: var(--y); background-size: 1px 20px; background-position: 9px 0; }
.g.v.h { background-image: var(--y), var(--x); background-size: 1px 20px, 10px 1px; background-position: 9px 0, 9px 10px; }
.g.up { background-image: var(--y), var(--x); background-size: 1px 10px, 10px 1px; background-position: 9px 0, 9px 10px; }
.g.dn { background-image: var(--y), var(--x); background-size: 1px 10px, 10px 1px; background-position: 9px 10px, 9px 10px; }
.g button { width: 9px; height: 9px; border: 1px solid #919191; border-radius: 1px; background: linear-gradient(#4b63a7, #4b63a7) center / 5px 1px no-repeat, linear-gradient(#fff, #dcdcdc); }
.sel td, .sel td.w { background: #39f; color: #fff; }
.sel td:first-child { background: none; }
.sel .n > .ed { background: linear-gradient(90deg, #ffffeb 4px, #7fbfff 4px, #39f 7px); }
td label { margin-left: -1px; }
input[type=checkbox] { appearance: none; width: 13px; height: 13px; margin-right: 3px; border: 1px solid #1c5180; background: #fff; position: relative; flex: none; }
input[type=checkbox]::after { content: ""; position: absolute; left: 4px; top: 1px; width: 3px; height: 7px; border: solid #21a121; border-width: 0 2px 2px 0; transform: rotate(40deg); }
.more { display: block; width: 15px; height: 16px; margin: 0 1px 0 auto; border: 1px solid #444b58; background: repeating-linear-gradient(90deg, #333a48 0 2px, transparent 2px 4px) 2px 6px / 10px 2px no-repeat, linear-gradient(#d2d4da, #f6f6f6); }

/* footer */
.bottom { display: flex; justify-content: space-between; padding-top: 8px; }
.method { flex: 0 1 590px; }
.method label { padding-left: 1px; }
.actions { display: grid; grid-template-columns: repeat(4, 76px); gap: 13px 8px; padding-top: 9px; }
.import { grid-column: 2 / 5; }
.ok { grid-column: 1; border-color: #2c7fb5; box-shadow: inset 0 0 0 1px #46d0f6; background: linear-gradient(#eff6fa, #e1edf3 50%, #cfdfe8 50%, #c6d6df); }
.grip { position: absolute; right: 0; bottom: 0; }
```
